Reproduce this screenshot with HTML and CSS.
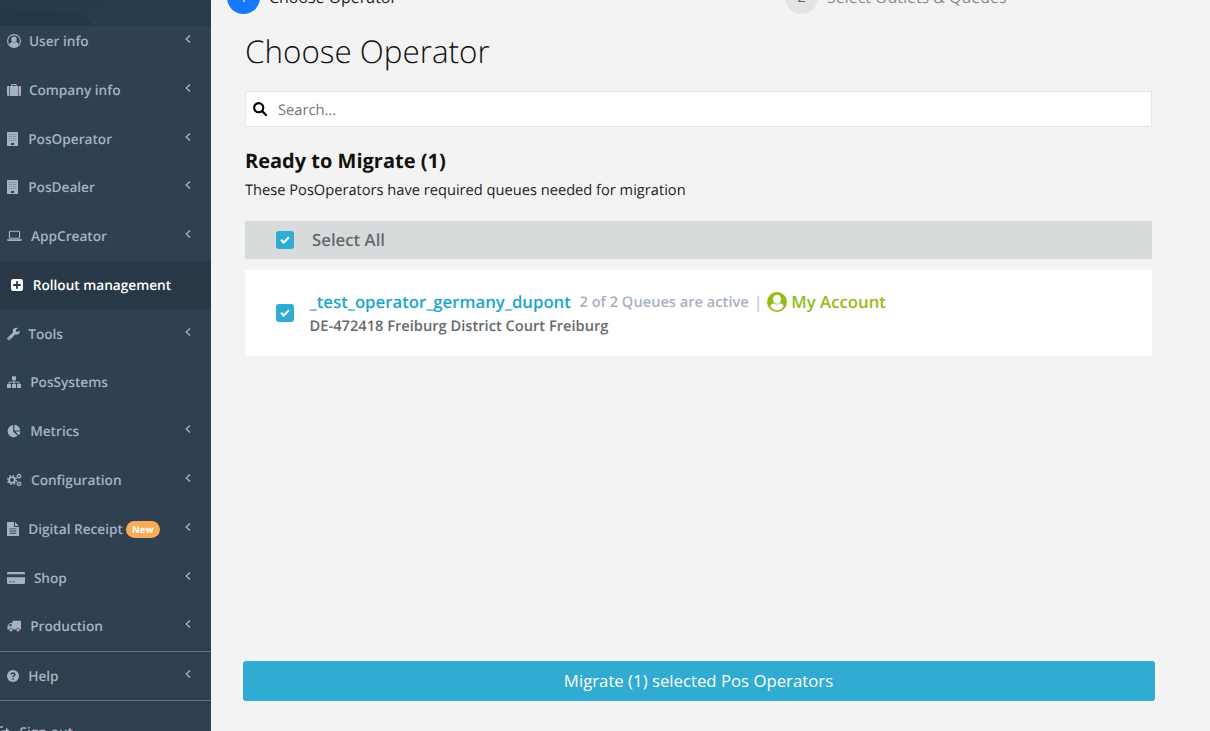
FILE: index.html
```html
<!DOCTYPE html>
<html lang="en">
<head>
<meta charset="utf-8">
<title>Choose Operator</title>
<link rel="stylesheet" href="styles.css">
</head>
<body>
<svg class="defs" width="0" height="0">
  <symbol id="chevron" viewBox="0 0 6 8"><path d="M5.100.4 1.200 4l3.900 3.600" fill="none" stroke="currentColor" stroke-width="1.300"/></symbol>
  <symbol id="building" viewBox="0 0 11 14"><path fill-rule="evenodd" d="M.5 0h10q.5 0 .5.5v13q0 .5-.5.5H.5Q0 14 0 13.500V.5Q0 0 .5 0zM4 11v2h3v-2z"/><path d="M2 2.500h7.500M2 4.500h7.500M2 6.500h7.500M2 8.500h7.500" stroke="#2f4050" stroke-width=".8" stroke-dasharray=".9 1" opacity=".55"/></symbol>
  <symbol id="check" viewBox="0 0 10 8"><path d="M1 3.800 3.700 6.500 9 1.200" fill="none" stroke="#fff" stroke-width="2.100"/></symbol>
</svg>
<div class="app">
  <aside class="sidebar">
    <div class="brand"><svg width="211" height="25" viewBox="0 0 211 25"><path d="M0 9 84 14 92 25H0z" fill="#243748"/><path d="M86 14 108 0H211V25H92z" fill="#293c4b"/><path d="M190 25 211 5v20z" fill="#273b4a"/></svg></div>
    <nav class="menu">
      <a class="item"><span class="icon w22"><svg width="14" height="14" viewBox="0 0 14 14"><circle cx="7" cy="7" r="6.400" fill="none" stroke="currentColor" stroke-width="1.100"/><ellipse cx="7" cy="5.500" rx="2.700" ry="3"/><path d="M2.400 11Q2.600 8.200 4.800 8q2.200 1.600 4.400 0 2.200.2 2.400 3Q9.500 13.400 7 13.400T2.400 11z"/></svg></span><span class="label">User info</span><svg class="chev"><use href="#chevron"/></svg></a>
      <a class="item"><span class="icon w22"><svg width="14" height="14" viewBox="0 0 14 14"><path fill-rule="evenodd" d="M2.700 3h1.600V2q0-1 1-1h3.400q1 0 1 1v1h1.600v10H2.700zM5.400 2v1h3.200V2zM0 4.300Q0 3 1.300 3H2.100v10h-.8Q0 13 0 11.700zM11.900 3h.8Q14 3 14 4.300v7.400q0 1.300-1.300 1.300h-.8z"/></svg></span><span class="label">Company info</span><svg class="chev"><use href="#chevron"/></svg></a>
      <a class="item"><span class="icon w21"><svg width="11" height="14"><use href="#building"/></svg></span><span class="label">PosOperator</span><svg class="chev"><use href="#chevron"/></svg></a>
      <a class="item"><span class="icon w21"><svg width="11" height="14"><use href="#building"/></svg></span><span class="label">PosDealer</span><svg class="chev"><use href="#chevron"/></svg></a>
      <a class="item"><span class="icon w24"><svg width="15" height="14" viewBox="0 0 15 14"><path fill-rule="evenodd" d="M2.900 1.700h9.200q1 0 1 1v6.100q0 1-1 1H2.900q-1 0-1-1V2.700q0-1 1-1zm.1 1.100v5.900h9V2.800z"/><path d="M0 10.300h15v.7q-.2 1.100-1.300 1.100H1.300Q.2 12.100 0 11z"/></svg></span><span class="label">AppCreator</span><svg class="chev"><use href="#chevron"/></svg></a>
      <a class="item active"><span class="icon w22"><svg width="12" height="12" viewBox="0 0 12 12"><rect width="12" height="12" rx="2.200"/><path d="M6 2.200v7.600M2.200 6h7.600" stroke="#293846" stroke-width="1.800"/></svg></span><span class="label">Rollout management</span></a>
      <a class="item"><span class="icon w21"><svg width="13" height="14" viewBox="0 0 13 14"><path fill-rule="evenodd" d="M.5 10.700 6 5.600Q5.200 3 7 1.600 8.800.1 11.300 1L9 2.600v1.600l1.500.8 2.200-1.500q.4 2-.9 3.300-1.500 1.400-3.700.8l-5 5.200q-1 .8-2 0l-.7-.6q-.7-.7.100-1.500zM1.700 11v1h1v-1z"/></svg></span><span class="label">Tools</span><svg class="chev"><use href="#chevron"/></svg></a>
      <a class="item"><span class="icon w23"><svg width="14" height="14" viewBox="0 0 14 14"><rect x="5" y="1.300" width="4" height="4" rx=".6"/><rect y="9" width="4" height="4" rx=".6"/><rect x="5" y="9" width="4" height="4" rx=".6"/><rect x="10" y="9" width="4" height="4" rx=".6"/><path d="M7 5v4M2 9V7.200h10V9" fill="none" stroke="currentColor"/></svg></span><span class="label">PosSystems</span></a>
      <a class="item"><span class="icon w23"><svg width="14" height="14" viewBox="0 0 14 14"><path d="M6.200 1v6.400l4.400 4.400A6.100 6.100 0 1 1 6.200 1z"/><path d="M7.400.7a6 6 0 0 1 5.700 5.800H7.400zM8.400 7.500h5a6 6 0 0 1-1.700 3.700z"/></svg></span><span class="label">Metrics</span><svg class="chev"><use href="#chevron"/></svg></a>
      <a class="item"><span class="icon w24"><svg width="15" height="14" viewBox="0 0 15 14" fill="none" stroke="currentColor"><circle cx="5" cy="7" r="2.900" stroke-width="1.900"/><circle cx="5" cy="7" r="4.400" stroke-width="1.400" stroke-dasharray="1.730 1.730"/><circle cx="12" cy="3.200" r="1.500" stroke-width="1.200"/><circle cx="12" cy="3.200" r="2.300" stroke-width=".8" stroke-dasharray=".9 .9"/><circle cx="12" cy="10.800" r="1.500" stroke-width="1.200"/><circle cx="12" cy="10.800" r="2.300" stroke-width=".8" stroke-dasharray=".9 .9"/></svg></span><span class="label">Configuration</span><svg class="chev"><use href="#chevron"/></svg></a>
      <a class="item"><span class="icon w21"><svg width="12" height="14" viewBox="0 0 12 14"><path fill-rule="evenodd" d="M.6 0H7v4.200q0 .8.800.8H12v8.400q0 .6-.6.600H.6Q0 14 0 13.400V.6Q0 0 .6 0zM8 .1 11.800 4H8zM2.600 6.400v.9h6.800v-.9zm0 2.200v.9h6.800v-.9zm0 2.200v.9h6.800v-.9z"/></svg></span><span class="label">Digital Receipt</span><span class="badge">New</span><svg class="chev"><use href="#chevron"/></svg></a>
      <a class="item"><span class="icon w27"><svg width="18" height="14" viewBox="0 0 18 14"><path fill-rule="evenodd" d="M1.300 1h15.400Q18 1 18 2.300v1H0v-1Q0 1 1.300 1zM0 6.200h18v5.500q0 1.300-1.300 1.300H1.300Q0 13 0 11.700zM2 10.400v.8h2v-.8zm3.200 0v.8h2.600v-.8z"/></svg></span><span class="label">Shop</span><svg class="chev"><use href="#chevron"/></svg></a>
      <a class="item"><span class="icon w23"><svg width="14" height="14" viewBox="0 0 14 14"><path fill-rule="evenodd" d="M5.500 1.700H13.500q.5 0 .5.500v8.300h-1.100a2 2 0 0 0-3.900 0H5.900a2 2 0 0 0-3.900 0H.5V6.800L2.900 4h2.600zM3.200 5 1.600 7.200h3V5z"/><circle cx="3.900" cy="11" r="1.500"/><circle cx="11" cy="11" r="1.500"/></svg></span><span class="label">Production</span><svg class="chev"><use href="#chevron"/></svg></a>
      <a class="item ruled"><span class="icon w21"><svg width="12" height="12" viewBox="0 0 12 12"><circle cx="6" cy="6" r="6"/><path d="M4 4.500Q4.300 3 6 3t1.900 1.500Q7.900 5.300 6.900 5.800 6 6.300 6 7.200M6 8.200v1.500" fill="none" stroke="#2f4050" stroke-width="1.500"/></svg></span><span class="label">Help</span><svg class="chev"><use href="#chevron"/></svg></a>
      <a class="item ruled signout"><span class="icon w21"><svg width="13" height="12" viewBox="0 0 13 12"><path d="M5 1H2.300Q.7 1 .7 2.500v7Q.7 11 2.300 11H5" fill="none" stroke="currentColor" stroke-width="1.300"/><path d="M4 4.200h4V1.500L12.700 6 8 10.500V7.800H4z"/></svg></span><span class="label">Sign out</span></a>
    </nav>
  </aside>
  <main class="main">
    <div class="steps">
      <div class="step current"><span class="num">1</span><span class="step-name">Choose Operator</span></div>
      <div class="step"><span class="num">2</span><span class="step-name">Select Outlets &amp; Queues</span></div>
    </div>
    <h1 class="title">Choose Operator</h1>
    <div class="search"><svg width="14" height="14" viewBox="0 0 14 14"><circle cx="5.700" cy="5.700" r="4.600" fill="none" stroke="#000" stroke-width="2.100"/><path d="m9 9 4 4" stroke="#000" stroke-width="2.400" stroke-linecap="round"/></svg><span class="placeholder">Search...</span></div>
    <h2 class="subtitle">Ready to Migrate (1)</h2>
    <p class="hint">These PosOperators have required queues needed for migration</p>
    <div class="select-all"><span class="checkbox"><svg width="10" height="8"><use href="#check"/></svg></span><span class="all-label">Select All</span></div>
    <div class="card">
      <span class="checkbox"><svg width="10" height="8"><use href="#check"/></svg></span>
      <div class="info">
        <div class="line"><span class="name">_test_operator_germany_dupont</span><span class="queues">2 of 2 Queues are active</span><span class="bar">|</span><svg class="avatar" width="20" height="20" viewBox="0 0 20 20"><circle cx="10" cy="10" r="10" fill="#93bd16"/><path d="M3.300 14.600Q3.900 11.800 6.700 11.300q3.300 2.500 6.600 0 2.800.5 3.400 3.300Q14.300 18.300 10 18.300T3.300 14.600z" fill="#fff"/><ellipse cx="10" cy="7.300" rx="4" ry="4.500" fill="#fff"/></svg><span class="account">My Account</span></div>
        <div class="address">DE-472418 Freiburg District Court Freiburg</div>
      </div>
    </div>
    <button class="migrate">Migrate (1) selected Pos Operators</button>
  </main>
</div>
</body>
</html>
```
FILE: styles.css
```css
* { box-sizing: border-box; }
body { margin: 0; background: #f3f3f3; font-family: "Open Sans", sans-serif; color: #111; text-rendering: geometricPrecision; }
.defs { display: block; }
.app { display: flex; width: 1210px; height: 731px; overflow: hidden; background: #f3f3f3; }
.sidebar { flex: none; width: 211px; background: #2f4050; overflow: hidden; }
.brand { height: 25.500px; background: #273a4a; }
.brand svg { display: block; }
.menu { display: flex; flex-direction: column; margin-top: -8.800px; }
.item { flex: none; display: flex; align-items: center; height: 48.780px; padding: 0 20px 0 6.700px; color: #a7b1c2; font-size: 13.650px; font-weight: 600; line-height: 20px; white-space: nowrap; }
.item.active { background: #293846; color: #fff; padding-left: 10.500px; }
.item.ruled { height: 49.500px; border-top: 1px solid #60707d; }
.item.signout { padding-left: 0; margin-left: -2px; height: 62px; }
.icon { flex: none; display: flex; align-items: center; }
.icon svg { display: block; fill: currentColor; }
.icon svg[fill="none"] { fill: none; }
.w21 { width: 21.500px; }
.w22 { width: 22.200px; }
.w23 { width: 23.500px; }
.w24 { width: 24.300px; }
.w27 { width: 27.200px; }
.chev { width: 6px; height: 8px; margin-left: auto; margin-bottom: 4px; }
.badge { margin: 1px 0 0 3px; padding: 0 6.200px; height: 17px; border-radius: 9px; background: #f8ac59; color: #fff; font-size: 9.500px; font-weight: 700; line-height: 17px; }
.main { flex: 1; min-width: 0; display: flex; flex-direction: column; padding: 0 58px 0 34px; }
.steps { display: flex; height: 14px; margin-left: -18px; align-items: flex-end; }
.step { display: flex; align-items: center; width: 558px; flex: none; font-size: 15.950px; color: #8b8b8b; }
.step.current { color: #222; }
.step-name { margin-bottom: 1px; }
.num { width: 33px; height: 33px; margin-right: 9px; border-radius: 50%; background: #e4e4e4; color: #666; font-size: 14px; line-height: 33px; text-align: center; }
.current .num { background: #1677ff; color: #fff; }
.title { margin: 14px 0 0; font-size: 31.400px; font-weight: 300; line-height: 48px; }
.search { display: flex; align-items: center; height: 36px; margin-top: 15px; padding-left: 7px; border: 1px solid #e5e6e7; background: #fff; }
.placeholder { margin: 1px 0 0 11px; font-size: 14.700px; color: #757575; }
.subtitle { margin: 20px 0 0; font-size: 20px; font-weight: 700; line-height: 28px; }
.hint { margin: 4px 0 0; font-size: 14.650px; line-height: 22px; color: #222; }
.select-all { display: flex; align-items: center; height: 38px; margin-top: 20px; padding-left: 31px; background: #d8dbdc; }
.checkbox { flex: none; display: flex; align-items: center; justify-content: center; width: 18px; height: 18px; border-radius: 3px; background: #30abd2; }
.all-label { margin: 0 0 2px 18px; font-size: 16.800px; font-weight: 600; color: #676a6c; }
.card { display: flex; align-items: center; height: 86px; margin-top: 10.500px; padding-left: 31px; background: #fff; }
.info { margin-left: 15.600px; padding-top: 2px; }
.line { display: flex; align-items: center; height: 24px; white-space: nowrap; font-weight: 600; }
.name { font-size: 16.750px; color: #1aa6cc; }
.queues { margin: 1px 0 0 8.600px; font-size: 14.650px; color: #a7b1c2; }
.bar { margin: 0 4px 0 5px; font-size: 16px; color: #b8bcc2; font-weight: 400; }
.account { margin-left: 4.700px; font-size: 16.800px; color: #93bd16; }
.address { font-size: 14.650px; line-height: 24px; font-weight: 600; color: #676a6c; }
.migrate { flex: none; height: 40px; margin: 305.500px -2.500px 0; padding: 0 0 2px; border: 0; border-radius: 3px; background: #30abd2; color: #fff; font: 400 16.750px "Open Sans", sans-serif; }
```
